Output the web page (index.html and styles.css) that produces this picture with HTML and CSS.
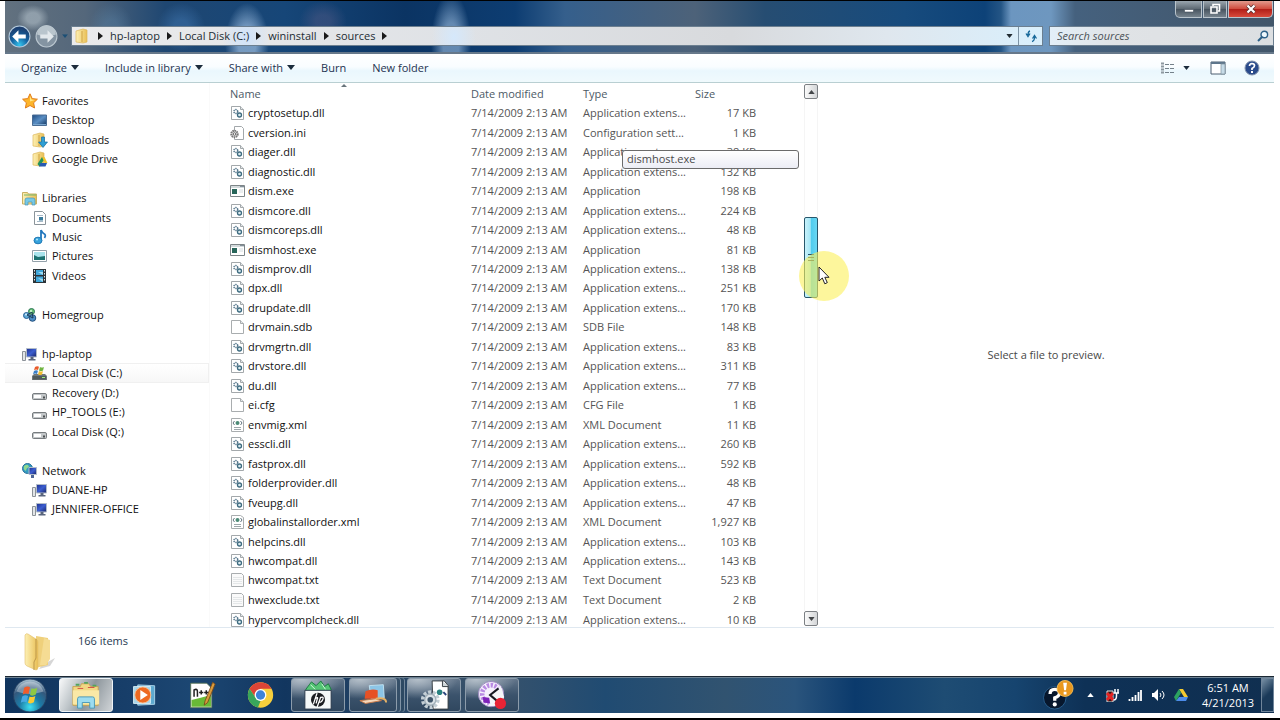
FILE: index.html
```html
<!DOCTYPE html>
<html lang="en">
<head>
<meta charset="utf-8">
<title>sources</title>
<link rel="stylesheet" href="styles.css">
</head>
<body>
<svg class="sprite" aria-hidden="true">
  <defs>
    <linearGradient id="gFolder" x1="0" x2="1"><stop offset="0" stop-color="#fdf0b4"/><stop offset="1" stop-color="#e9bf55"/></linearGradient>
    <linearGradient id="gScreen" x1="0" x2="1" y1="0" y2="1"><stop offset="0" stop-color="#1e2f8c"/><stop offset=".5" stop-color="#3c5ed0"/><stop offset="1" stop-color="#182468"/></linearGradient>
    <linearGradient id="gDesk" x1="0" x2="1" y1="0" y2="1"><stop offset="0" stop-color="#1d4b82"/><stop offset=".5" stop-color="#5b8fc4"/><stop offset="1" stop-color="#12355f"/></linearGradient>
    <radialGradient id="gOrb" cx=".5" cy=".85" r=".8"><stop offset="0" stop-color="#3fe0f2"/><stop offset=".4" stop-color="#1c7ba6"/><stop offset=".75" stop-color="#34587c"/><stop offset="1" stop-color="#9db6c8"/></radialGradient>
    <radialGradient id="gBack" cx=".5" cy=".9" r=".8"><stop offset="0" stop-color="#35c5ee"/><stop offset=".5" stop-color="#1462a0"/><stop offset="1" stop-color="#1c3f70"/></radialGradient>
  </defs>
  <symbol id="dll" viewBox="0 0 16 16"><path d="M1.500 1.500h9l3 3v10h-12z" fill="#fff" stroke="#a3a8ab"/><path d="M10.500 1.500v3h3" fill="#e4e8ea" stroke="#a3a8ab"/><circle cx="5.800" cy="6.500" r="1.900" fill="none" stroke="#56778c" stroke-width="1.500" stroke-dasharray="1.200 .7"/><circle cx="9.500" cy="10" r="2" fill="#dcebf0" stroke="#3e6c80" stroke-width="1.300"/></symbol>
  <symbol id="ini" viewBox="0 0 16 16"><path d="M4.500 1.500h7l2 2v11h-9z" fill="#fff" stroke="#a3a8ab"/><circle cx="4.500" cy="9" r="3.200" fill="#e8e8e8" stroke="#777" stroke-width="2" stroke-dasharray="1.500 .6"/><circle cx="4.500" cy="9" r="1.300" fill="#fff" stroke="#666"/></symbol>
  <symbol id="exe" viewBox="0 0 16 16"><path d="M.5 2.500h14v11H.5z" fill="#fff" stroke="#7d8588"/><path d="M1 3h13v2H1z" fill="#d3dadc"/><path d="M2 6h5v5H2z" fill="#28665a"/><path d="M10.500 3.500h1M12.500 3.500h1" stroke="#345"/><path d="M9 7h4M9 9h4" stroke="#d5dcdf"/></symbol>
  <symbol id="blank" viewBox="0 0 16 16"><path d="M1.500 1.500h9l3 3v10h-12z" fill="#fff" stroke="#a9adaf"/><path d="M10.500 1.500v3h3" fill="#e4e8ea" stroke="#a9adaf"/></symbol>
  <symbol id="txt" viewBox="0 0 16 16"><path d="M1.500 1.500h10l2 2v11h-12z" fill="#fafafa" stroke="#a9adaf"/><path d="M3 5.500h9M3 7.500h9M3 9.500h9M3 11.500h9" stroke="#e4e7e8"/></symbol>
  <symbol id="xml" viewBox="0 0 16 16"><path d="M1.500 1.500h9l3 2v11h-12z" fill="#fff" stroke="#a9adaf"/><path d="M4.500 4L3 6l1.500 2M10.500 4L12 6l-1.500 2" fill="none" stroke="#63757f"/><circle cx="7.500" cy="6" r="2" fill="#4b8a76"/><path d="M4 10.500h7M4 12.500h7" stroke="#9da7ab"/></symbol>
  <symbol id="star" viewBox="0 0 16 16"><path d="M8 .8l2.200 4.800 5.200.6-3.800 3.600 1 5.200L8 12.500 3.400 15l1-5.200L.6 6.200l5.200-.6z" fill="#fdb52a" stroke="#e17c1b"/><path d="M8 3l1.500 3.500 3.300.5L8 8.500z" fill="#ffe78a"/></symbol>
  <symbol id="desktop" viewBox="0 0 16 16"><path d="M.5 3h14v10.500H.5z" fill="url(#gDesk)" stroke="#4a6d94"/><path d="M1 12h13v1H1z" fill="#7ba7d0"/></symbol>
  <symbol id="folder" viewBox="0 0 16 16"><path d="M1 3l7-2 4 1v12l-4 1-7-1z" fill="url(#gFolder)" stroke="#dcb85d" stroke-width=".7"/><path d="M7 3v11" stroke="#cfa445"/></symbol>
  <symbol id="downloads" viewBox="0 0 16 16"><use href="#folder"/><path d="M9.500 5h3v5h3L11 15.500 6.500 10h3z" fill="#2f9fd4" stroke="#176ea3" stroke-width=".7"/></symbol>
  <symbol id="gdfolder" viewBox="0 0 16 16"><use href="#folder"/><path d="M10 6h2.500l3 6h-3z" fill="#efc22f"/><path d="M10 6L5.500 13l2 2.500 4-6z" fill="#21955b"/><path d="M8.500 12H15l-1.500 3.500H7z" fill="#2759b0"/></symbol>
  <symbol id="libraries" viewBox="0 0 16 16"><path d="M.5 2.500h5l1 1.500h8v10H.5z" fill="url(#gFolder)" stroke="#c9b163"/><path d="M2 5h12" stroke="#77b66e"/><path d="M3 15v-5q0-2 2-2h6q2 0 2 2v5h-3v-3H6v3z" fill="#76c9e6" stroke="#4a92b4" stroke-width=".7"/></symbol>
  <symbol id="documents" viewBox="0 0 16 16"><path d="M2.500 1.500h8l3 3v10h-11z" fill="#fff" stroke="#8b949a"/><path d="M5 5.500h6M5 11.500h6" stroke="#a8b9c7"/><path d="M7 7h4v3.500H7z" fill="#397a9b"/></symbol>
  <symbol id="music" viewBox="0 0 16 16"><path d="M9 1v10M9 1q1 3 4 4.500 1 1.500-.5 3.500" fill="none" stroke="#2277bd" stroke-width="1.800"/><ellipse cx="6" cy="11.500" rx="4" ry="3.300" fill="#36a2dc" stroke="#1f78b4"/><circle cx="5" cy="10.500" r="1" fill="#b3e8fb"/></symbol>
  <symbol id="pictures" viewBox="0 0 16 16"><path d="M.5 2.500h14v11H.5z" fill="#fff" stroke="#93a1aa"/><path d="M2 4h11v8H2z" fill="#a9e3ec"/><path d="M2 7l4 2 7-1v4H2z" fill="#1c7271"/></symbol>
  <symbol id="videos" viewBox="0 0 16 16"><path d="M1 1h13v14H1z" fill="#2b3338"/><path d="M4 2h7v5H4zM4 8.500h7V14H4z" fill="#40a7da"/><path d="M6 4l5 3V4zM6 10l5 4v-3z" fill="#a0dcf2"/><path d="M2.500 2v12M12.500 2v12" stroke="#dde5e8" stroke-dasharray="1.500 1.500"/></symbol>
  <symbol id="homegroup" viewBox="0 0 16 16"><circle cx="9.500" cy="4.500" r="3" fill="#69bf75" stroke="#2d7858"/><circle cx="4.500" cy="8.500" r="3" fill="#5fa9d6" stroke="#275e93"/><circle cx="10.500" cy="11" r="3.300" fill="#4c8dc6" stroke="#24517f"/><path d="M5 8l5-3 1 6z" fill="none" stroke="#1d3c55"/><circle cx="9" cy="4" r="1" fill="#d8ffdc"/><circle cx="4" cy="7.500" r="1" fill="#d4eeff"/></symbol>
  <symbol id="pc" viewBox="0 0 16 16"><path d="M.5 5.500h3v9h-3z" fill="#e3e6e8" stroke="#8c9298"/><path d="M4.500 2.500h10v8.500h-10z" fill="url(#gScreen)" stroke="#b2bcc9"/><path d="M8.500 11h3v2h2v1.500h-7V13h2z" fill="#59657d"/></symbol>
  <symbol id="cdrive" viewBox="0 0 16 16"><path d="M2 9h11l2 2v4H0v-4z" fill="#6e777b"/><path d="M1 11h13v3.500H1z" fill="#505b5c"/><path d="M3 2q2-1.500 4-.3L6 5q-2-1-4 .2z" fill="#e85b2b"/><path d="M8 2q2 1 4 0l-1 3.500q-2 1-4 0z" fill="#70b441"/><path d="M2 6q2-1.500 4-.3L5 9q-2-1-4 .2z" fill="#3a80c9"/><path d="M7 6q2 1 4 0l-1 3.500q-2 1-4 0z" fill="#f3bd2e"/><path d="M10 12.500h3" stroke="#9fef7e"/></symbol>
  <symbol id="drive" viewBox="0 0 16 16"><path d="M2 8h11l2 2H0z" fill="#e2e4e5"/><path d="M.5 10q0-1.500 1.500-1.500h11q1.500 0 1.500 1.500v3.500q0 1-1 1h-12q-1 0-1-1z" fill="#c3c7c9" stroke="#777c7f"/><path d="M2 10h7v3H2z" fill="#fff"/><path d="M11 11.500h2v2h-2z" fill="#4c5052"/></symbol>
  <symbol id="network" viewBox="0 0 16 16"><circle cx="5.500" cy="5.500" r="5" fill="#359bc2" stroke="#28719a"/><path d="M2 3q4-3 5 1-3 1-3 4-3-1-2-5z" fill="#8ed98f"/><path d="M7 4.500h7.500v7H7z" fill="url(#gScreen)" stroke="#b2bcc9"/><path d="M9 12h3v3H9z" fill="#4e6795"/></symbol>
  <symbol id="caret" viewBox="0 0 8 5"><path d="M0 0h8L4 5z" fill="currentColor"/></symbol>
  <symbol id="chev" viewBox="0 0 5 8"><path d="M0 0l5 4-5 4z" fill="currentColor"/></symbol>
</svg>

<div class="screen">
  <main class="window">
    <header class="glass">
      <div class="caption">
        <button class="cap min" aria-label="Minimize"><svg viewBox="0 0 12 12"><path d="M1.500 6.500h9v2.500h-9z" fill="#fff" stroke="#434f5b" stroke-width=".6"/></svg></button>
        <button class="cap restore" aria-label="Restore"><svg viewBox="0 0 12 12"><path d="M4 3V1.500h6.500v6.500H9M2 4h6v6H2z" fill="none" stroke="#fff" stroke-width="1.600"/></svg></button>
        <button class="cap close" aria-label="Close"><svg viewBox="0 0 12 12"><path d="M2.500 2.500l7 7M9.500 2.500l-7 7" stroke="#533" stroke-width="3.800"/><path d="M2.500 2.500l7 7M9.500 2.500l-7 7" stroke="#fff" stroke-width="2.200"/></svg></button>
      </div>
      <div class="navrow">
        <button class="round" aria-label="Back"><svg viewBox="0 0 22 22"><circle cx="11" cy="11" r="10" fill="url(#gBack)" stroke="#b5cbdd"/><path d="M4 11l6-6v4h7v4h-7v4z" fill="#fff"/></svg></button>
        <button class="round" aria-label="Forward"><svg viewBox="0 0 22 22"><circle cx="11" cy="11" r="10" fill="#8494a2" stroke="#bcc8d1"/><path d="M2 9a9 9 0 0118 0q-9 4-18 0z" fill="#b9c5cd"/><path d="M18 11l-6-6v4H5v4h7v4z" fill="#e2e8ec"/></svg></button>
        <button class="recent" aria-label="Recent pages"><svg viewBox="0 0 8 5"><use href="#caret"/></svg></button>
        <div class="address">
          <svg class="i16"><use href="#folder"/></svg>
          <svg class="chev"><use href="#chev"/></svg><a href="#">hp-laptop</a>
          <svg class="chev"><use href="#chev"/></svg><a href="#">Local Disk (C:)</a>
          <svg class="chev"><use href="#chev"/></svg><a href="#">wininstall</a>
          <svg class="chev"><use href="#chev"/></svg><a href="#">sources</a>
          <svg class="chev"><use href="#chev"/></svg>
          <button class="history" aria-label="Previous locations"><svg viewBox="0 0 8 5"><use href="#caret"/></svg></button>
          <button class="refresh" aria-label="Refresh"><svg viewBox="0 0 14 14"><path d="M6 2Q4 2.500 4 6M2 4.500L4 7.500 6 4.500M8 12.500q2.500-.5 2.500-4.500M8.500 9.500L10.500 6.500l2 3" fill="none" stroke="#17689a" stroke-width="1.300"/></svg></button>
        </div>
        <label class="search"><input type="text" placeholder="Search sources" aria-label="Search sources"><svg viewBox="0 0 12 12"><circle cx="7.300" cy="4.500" r="3.300" fill="#eef8fd" stroke="#2d6188" stroke-width="1.400"/><path d="M5 7l-4 4" stroke="#2d6188" stroke-width="2"/></svg></label>
      </div>
    </header>

    <div class="toolbar">
      <button>Organize <svg class="caret"><use href="#caret"/></svg></button>
      <button>Include in library <svg class="caret"><use href="#caret"/></svg></button>
      <button>Share with <svg class="caret"><use href="#caret"/></svg></button>
      <button>Burn</button>
      <button>New folder</button>
      <div class="tools">
        <button class="view" aria-label="Change your view"><svg class="i14" viewBox="0 0 14 14"><path d="M1 2.500h3M1 5.500h3M1 8.500h3M1 11.500h3" stroke="#8d989f" stroke-width="2"/><path d="M5 3.500h4M10 3.500h4M5 7.500h4M10 7.500h4M5 11.500h4M10 11.500h4" stroke="#74818a"/></svg><svg class="caret"><use href="#caret"/></svg></button>
        <button aria-label="Show the preview pane"><svg class="i16" viewBox="0 0 16 16"><path d="M1 2h14v12H1z" fill="#fff" stroke="#4d5f70"/><path d="M1 3h14" stroke="#5e768b" stroke-width="2"/><path d="M11 4h4v10h-4z" fill="#c6dbe7" stroke="#7f929f" stroke-width=".7"/></svg></button>
        <button aria-label="Get help"><svg class="i16" viewBox="0 0 16 16"><circle cx="8" cy="8" r="7" fill="#294a8b" stroke="#8493ac"/><path d="M5.500 6Q5.500 3.700 8 3.700t2.500 2Q10.500 7 8 8.500v1.500" fill="none" stroke="#fff" stroke-width="1.700"/><path d="M7 11h2v2H7z" fill="#fff"/></svg></button>
      </div>
    </div>

    <div class="body">
      <nav class="tree" aria-label="Folders">
        <div class="group favorites">
          <a href="#"><svg class="i16"><use href="#star"/></svg>Favorites</a>
          <a class="sub" href="#"><svg class="i16"><use href="#desktop"/></svg>Desktop</a>
          <a class="sub" href="#"><svg class="i16"><use href="#downloads"/></svg>Downloads</a>
          <a class="sub" href="#"><svg class="i16"><use href="#gdfolder"/></svg>Google Drive</a>
        </div>
        <div class="group libs">
          <a href="#"><svg class="i16"><use href="#libraries"/></svg>Libraries</a>
          <a class="sub" href="#"><svg class="i16"><use href="#documents"/></svg>Documents</a>
          <a class="sub" href="#"><svg class="i16"><use href="#music"/></svg>Music</a>
          <a class="sub" href="#"><svg class="i16"><use href="#pictures"/></svg>Pictures</a>
          <a class="sub" href="#"><svg class="i16"><use href="#videos"/></svg>Videos</a>
        </div>
        <div class="group home">
          <a href="#"><svg class="i16"><use href="#homegroup"/></svg>Homegroup</a>
        </div>
        <div class="group computer">
          <a href="#"><svg class="i16"><use href="#pc"/></svg>hp-laptop</a>
          <a class="sub current" href="#"><svg class="i16"><use href="#cdrive"/></svg>Local Disk (C:)</a>
          <a class="sub" href="#"><svg class="i16"><use href="#drive"/></svg>Recovery (D:)</a>
          <a class="sub" href="#"><svg class="i16"><use href="#drive"/></svg>HP_TOOLS (E:)</a>
          <a class="sub" href="#"><svg class="i16"><use href="#drive"/></svg>Local Disk (Q:)</a>
        </div>
        <div class="group net">
          <a href="#"><svg class="i16"><use href="#network"/></svg>Network</a>
          <a class="sub" href="#"><svg class="i16"><use href="#pc"/></svg>DUANE-HP</a>
          <a class="sub" href="#"><svg class="i16"><use href="#pc"/></svg>JENNIFER-OFFICE</a>
        </div>
      </nav>

      <section class="files">
        <table>
          <colgroup><col class="c-name"><col class="c-date"><col class="c-type"><col class="c-size"><col></colgroup>
          <thead><tr><th>Name<svg class="sort" viewBox="0 0 8 4"><path d="M0 4l4-4 4 4z" fill="#69757c"/></svg></th><th>Date modified</th><th>Type</th><th>Size</th><th></th></tr></thead>
          <tbody>
            <tr><td><svg class="i16"><use href="#dll"/></svg>cryptosetup.dll</td><td>7/14/2009 2:13 AM</td><td>Application extens...</td><td>17 KB</td></tr>
            <tr><td><svg class="i16"><use href="#ini"/></svg>cversion.ini</td><td>7/14/2009 2:13 AM</td><td>Configuration sett...</td><td>1 KB</td></tr>
            <tr><td><svg class="i16"><use href="#dll"/></svg>diager.dll</td><td>7/14/2009 2:13 AM</td><td>Application extens...</td><td>38 KB</td></tr>
            <tr><td><svg class="i16"><use href="#dll"/></svg>diagnostic.dll</td><td>7/14/2009 2:13 AM</td><td>Application extens...</td><td>132 KB</td></tr>
            <tr><td><svg class="i16"><use href="#exe"/></svg>dism.exe</td><td>7/14/2009 2:13 AM</td><td>Application</td><td>198 KB</td></tr>
            <tr><td><svg class="i16"><use href="#dll"/></svg>dismcore.dll</td><td>7/14/2009 2:13 AM</td><td>Application extens...</td><td>224 KB</td></tr>
            <tr><td><svg class="i16"><use href="#dll"/></svg>dismcoreps.dll</td><td>7/14/2009 2:13 AM</td><td>Application extens...</td><td>48 KB</td></tr>
            <tr><td><svg class="i16"><use href="#exe"/></svg>dismhost.exe</td><td>7/14/2009 2:13 AM</td><td>Application</td><td>81 KB</td></tr>
            <tr><td><svg class="i16"><use href="#dll"/></svg>dismprov.dll</td><td>7/14/2009 2:13 AM</td><td>Application extens...</td><td>138 KB</td></tr>
            <tr><td><svg class="i16"><use href="#dll"/></svg>dpx.dll</td><td>7/14/2009 2:13 AM</td><td>Application extens...</td><td>251 KB</td></tr>
            <tr><td><svg class="i16"><use href="#dll"/></svg>drupdate.dll</td><td>7/14/2009 2:13 AM</td><td>Application extens...</td><td>170 KB</td></tr>
            <tr><td><svg class="i16"><use href="#blank"/></svg>drvmain.sdb</td><td>7/14/2009 2:13 AM</td><td>SDB File</td><td>148 KB</td></tr>
            <tr><td><svg class="i16"><use href="#dll"/></svg>drvmgrtn.dll</td><td>7/14/2009 2:13 AM</td><td>Application extens...</td><td>83 KB</td></tr>
            <tr><td><svg class="i16"><use href="#dll"/></svg>drvstore.dll</td><td>7/14/2009 2:13 AM</td><td>Application extens...</td><td>311 KB</td></tr>
            <tr><td><svg class="i16"><use href="#dll"/></svg>du.dll</td><td>7/14/2009 2:13 AM</td><td>Application extens...</td><td>77 KB</td></tr>
            <tr><td><svg class="i16"><use href="#blank"/></svg>ei.cfg</td><td>7/14/2009 2:13 AM</td><td>CFG File</td><td>1 KB</td></tr>
            <tr><td><svg class="i16"><use href="#xml"/></svg>envmig.xml</td><td>7/14/2009 2:13 AM</td><td>XML Document</td><td>11 KB</td></tr>
            <tr><td><svg class="i16"><use href="#dll"/></svg>esscli.dll</td><td>7/14/2009 2:13 AM</td><td>Application extens...</td><td>260 KB</td></tr>
            <tr><td><svg class="i16"><use href="#dll"/></svg>fastprox.dll</td><td>7/14/2009 2:13 AM</td><td>Application extens...</td><td>592 KB</td></tr>
            <tr><td><svg class="i16"><use href="#dll"/></svg>folderprovider.dll</td><td>7/14/2009 2:13 AM</td><td>Application extens...</td><td>48 KB</td></tr>
            <tr><td><svg class="i16"><use href="#dll"/></svg>fveupg.dll</td><td>7/14/2009 2:13 AM</td><td>Application extens...</td><td>47 KB</td></tr>
            <tr><td><svg class="i16"><use href="#xml"/></svg>globalinstallorder.xml</td><td>7/14/2009 2:13 AM</td><td>XML Document</td><td>1,927 KB</td></tr>
            <tr><td><svg class="i16"><use href="#dll"/></svg>helpcins.dll</td><td>7/14/2009 2:13 AM</td><td>Application extens...</td><td>103 KB</td></tr>
            <tr><td><svg class="i16"><use href="#dll"/></svg>hwcompat.dll</td><td>7/14/2009 2:13 AM</td><td>Application extens...</td><td>143 KB</td></tr>
            <tr><td><svg class="i16"><use href="#txt"/></svg>hwcompat.txt</td><td>7/14/2009 2:13 AM</td><td>Text Document</td><td>523 KB</td></tr>
            <tr><td><svg class="i16"><use href="#txt"/></svg>hwexclude.txt</td><td>7/14/2009 2:13 AM</td><td>Text Document</td><td>2 KB</td></tr>
            <tr><td><svg class="i16"><use href="#dll"/></svg>hypervcomplcheck.dll</td><td>7/14/2009 2:13 AM</td><td>Application extens...</td><td>10 KB</td></tr>
          </tbody>
        </table>
        <div class="tip" role="tooltip">dismhost.exe</div>
      </section>

      <div class="scroll">
        <button aria-label="Scroll up"><svg viewBox="0 0 8 5"><path d="M0 5l4-5 4 5z" fill="#434649"/></svg></button>
        <div class="track"><div class="thumb"><i></i><i></i><i></i></div></div>
        <button aria-label="Scroll down"><svg viewBox="0 0 8 5"><use href="#caret"/></svg></button>
        <div class="halo"></div>
        <svg class="pointer" viewBox="0 0 12 19"><path d="M1 1v14l3.300-3 2.500 5.800 2.500-1.200-2.500-5.300H11z" fill="#fff" stroke="#222"/></svg>
      </div>

      <aside class="preview">Select a file to preview.</aside>
    </div>

    <footer class="details">
      <svg class="bigfolder" viewBox="0 0 34 40"><path d="M19 33l13-7-5 8-11 3z" fill="#bbb" opacity=".6"/><path d="M13 4l12 2v27l-13 3z" fill="#efd07b"/><path d="M21 6l6 2v19l-4 6h-6z" fill="#f5dc93"/><path d="M2 3q1-2 3-1l8 5q2 1 2 3v25q0 3-2 3L4 34q-2-1-2-3z" fill="url(#gFolder)" stroke="#e1be6b" stroke-width=".6"/><path d="M13 7v19l-2 4v8" fill="none" stroke="#bd974a"/></svg>
      <span>166 items</span>
    </footer>
  </main>

  <footer class="taskbar">
    <button class="orb" aria-label="Start"><svg viewBox="0 0 36 36"><circle cx="18" cy="18" r="17" fill="url(#gOrb)" stroke="#233f60"/><path d="M4 14a14.500 14 0 0128 0q-14 5-28 0z" fill="#fff" opacity=".35"/><path d="M12 10q3-2 6-.5l-1.500 7q-3-1.500-6 .5z" fill="#f15c2b"/><path d="M19.500 10.500q3 1.500 6-.5L24 17q-3 2-6 .5z" fill="#8fc943"/><path d="M10 19q3-2 6-.5L14.500 25q-3-1.500-6 .5z" fill="#48a9e4"/><path d="M17.500 19q3 1.500 6-.5L22 25q-3 2-6 .5z" fill="#fccb32"/></svg></button>
    <button class="task active" aria-label="Windows Explorer"><svg viewBox="0 0 32 32"><path d="M2 7h8l1-3h8l2 3h8v20H2z" fill="#f2d783" stroke="#c5a352"/><path d="M2 11h28v15H2z" fill="#fae8a6"/><path d="M5 5h4M14 3h4M23 6h4" stroke="#52a45c" stroke-width="2"/><path d="M7 9h6M18 8h7" stroke="#d34e43"/><path d="M7 30V20q0-2 2-2h14q2 0 2 2v10h-5v-6h-8v6z" fill="#9cdcf0" stroke="#4798b7"/></svg></button>
    <button class="task pin" aria-label="Media Player"><svg viewBox="0 0 32 32"><path d="M8 4l20 1v22l-20 1z" fill="#5ea9cf" stroke="#b4dcef"/><path d="M3 6h20v20H3z" fill="#a8d6eb" stroke="#e1f4fb"/><circle cx="14" cy="16" r="9.500" fill="#ee6a22" stroke="#fbc69b"/><path d="M11 10l9 6-9 6z" fill="#fff"/></svg></button>
    <button class="task pin" aria-label="Notepad++"><svg viewBox="0 0 32 32"><path d="M2 2h19l6 6v23H2z" fill="#fff" stroke="#516e4c"/><path d="M3 22q12-3 23-6v14H3z" fill="#69b936"/><path d="M6 18v-8q4-2 4 2v6M12 13h5M14.500 10.500v5M18 13h5M20.500 10.500v5" fill="none" stroke="#222" stroke-width="1.800"/><path d="M28 1l3 2-9 22-4 3 1-5z" fill="#d99b3c" stroke="#74461a"/></svg></button>
    <button class="task pin" aria-label="Chrome"><svg viewBox="0 0 32 32"><circle cx="16" cy="16" r="15" fill="#f7cf3c"/><path d="M3 8.500A15 15 0 0129 8.500H16L10 19z" fill="#db4437"/><path d="M3 8.500L10 19l6 4-3 7.700A15 15 0 013 8.500z" fill="#39a55b"/><circle cx="16" cy="16" r="7" fill="#fff"/><circle cx="16" cy="16" r="5.500" fill="#3d83d9"/></svg></button>
    <button class="task" aria-label="HP Support"><svg viewBox="0 0 32 32"><path d="M3 10l6-8 5 4 5-5 4 6 4-3 3 6-4 4H6z" fill="#55c575" stroke="#187a3d"/><path d="M8 5l5 5M20 4l4 6" stroke="#d6ffe1"/><path d="M2 11h28v20H2z" fill="#f5f8f8" stroke="#263547"/><circle cx="16" cy="21" r="7.500" fill="#1b1d21"/><path d="M15 14l-4 12M13 20q4-3 2 1l-1 4M19 18l-4 11M18 19q5-2 3 2t-4 2" fill="none" stroke="#fff" stroke-width="1.400"/></svg></button>
    <button class="task stacked" aria-label="Remote desktop"><svg viewBox="0 0 32 32"><path d="M12 6l15-1 1 14-14 1z" fill="#8cc5e6" stroke="#c0e2f2"/><path d="M8 12q7-3 13-1v9H7z" fill="#e75125"/><path d="M2 22l17-2 6 2-17 3z" fill="#f6d8bb" stroke="#c87846"/><path d="M19 20q11-2 11 4" fill="none" stroke="#e5b166" stroke-width="2"/></svg></button>
    <button class="task" aria-label="Setup"><svg viewBox="0 0 32 32"><path d="M14 1h13l4 5v25H15z" fill="#fff" stroke="#343b40"/><path d="M25 1v6h6" fill="#ccd4d8" stroke="#343b40"/><circle cx="22" cy="13" r="3" fill="#27817f"/><path d="M26 13l3 3" stroke="#28427a" stroke-width="2"/><circle cx="12" cy="21" r="7.500" fill="none" stroke="#c3ced5" stroke-width="5" stroke-dasharray="3 1.710"/><circle cx="12" cy="21" r="6" fill="#d8e0e5" stroke="#a2b0b9" stroke-width="1.500"/><circle cx="12" cy="21" r="3" fill="#40566a"/></svg></button>
    <button class="task" aria-label="Recorder"><svg viewBox="0 0 32 32"><circle cx="15" cy="15" r="13.500" fill="#f5f1fc" stroke="#9a86bf"/><circle cx="15" cy="15" r="9.500" fill="none" stroke="#b98be3" stroke-width="5" stroke-dasharray="2.500 1.500"/><path d="M15 15L25 6l4 12-4 9-13 1z" fill="#f4f6f9"/><path d="M6 18l7 1 1 6-7-1z" fill="#7d23b9"/><path d="M23 9l-9 7 7 6" fill="none" stroke="#161922" stroke-width="2.200"/><circle cx="25" cy="25" r="6" fill="#e82435"/></svg></button>
    <div class="tray">
      <svg class="alert" viewBox="0 0 32 32"><circle cx="12" cy="19" r="12" fill="#07172d" stroke="#2a6090"/><path d="M7 15q0-5 5-5t5 4q0 3-5 5v3" fill="none" stroke="#fff" stroke-width="3.500"/><circle cx="12" cy="26" r="2.200" fill="#fff"/><circle cx="23" cy="9" r="8.500" fill="#e9981f" stroke="#f5bd54"/><path d="M21 3h4l-1 8h-2zM21.500 12.500h3v3h-3z" fill="#fff"/></svg>
      <button aria-label="Show hidden icons"><svg class="up" viewBox="0 0 8 5"><path d="M0 5l4-5 4 5z" fill="#fff"/></svg></button>
      <svg class="i14" viewBox="0 0 14 14"><path d="M2 3h6v11H2z" fill="#301818" stroke="#e3e3e3"/><path d="M2 5l6 7M8 5l-6 7" stroke="#e52323" stroke-width="3"/><path d="M10 1v4M13 1v4M8.500 5H14M11.500 5v3q0 4-3 4" fill="none" stroke="#fff" stroke-width="1.500"/></svg>
      <svg class="i14" viewBox="0 0 14 14"><path d="M1.500 11v2M4.500 9v4M7.500 7v6M10.500 4v9M13 2v11" stroke="#fff" stroke-width="1.800"/></svg>
      <svg class="i14" viewBox="0 0 14 14"><path d="M1 5h2l4-4v12L3 9H1z" fill="#fff"/><path d="M9 5q2 2 0 4M11 3q4 4 0 8" fill="none" stroke="#fff"/></svg>
      <svg class="i14" viewBox="0 0 14 14"><path d="M5 1h4l5 8h-4z" fill="#f4c92f"/><path d="M5 1L0 9l2 4 5-8z" fill="#2ca260"/><path d="M5 9h9l-2 4H2z" fill="#4c8be9"/></svg>
      <time class="clock"><span>6:51 AM</span><span>4/21/2013</span></time>
      <button class="show" aria-label="Show desktop"></button>
    </div>
  </footer>
</div>
</body>
</html>
```

FILE: styles.css
```css
* { box-sizing: border-box; }
body {
  margin: 0;
  background: #fff;
  font-family: "Open Sans", "Noto Sans", sans-serif;
  font-size: 11px;
  line-height: 16px;
  color: #111;
}
button {
  margin: 0;
  padding: 0;
  border: 0;
  background: none;
  font: inherit;
  color: inherit;
  display: flex;
  align-items: center;
  justify-content: center;
}
a { color: inherit; text-decoration: none; }
svg { flex: none; display: block; }
.sprite { position: absolute; width: 0; height: 0; }
.i16 { width: 16px; height: 16px; }
.i14 { width: 14px; height: 14px; }
.caret { width: 8px; height: 5px; }

.screen {
  height: 100vh;
  display: flex;
  flex-direction: column;
  border-top: 1px solid #000;
  border-bottom: 2px solid #000;
  padding: 0 6px 5px 5px;
}
.window { flex: 1; min-height: 0; display: flex; flex-direction: column; }

/* Title bar and address row */
.glass {
  height: 53px;
  display: flex;
  flex-direction: column;
  border-bottom: 2px solid #66788a;
  background:
    radial-gradient(ellipse 16px 13px at 28px 17px, #a9b7c1aa 40%, transparent),
    radial-gradient(ellipse 22px 24px at 106px 26px, #5c85a866 30%, transparent),
    radial-gradient(ellipse 24px 24px at 176px 26px, #3f74ad88 30%, transparent),
    radial-gradient(ellipse 22px 40px at 242px 42px, #a4c4e6aa 40%, transparent),
    radial-gradient(ellipse 24px 20px at 318px 20px, #4c588488 30%, transparent),
    radial-gradient(ellipse 20px 50px at 446px 42px, #8fb1d4aa 40%, transparent),
    linear-gradient(90deg, #62717f 0, #54677b 80px, #1f4772 160px, #164678 280px, #0b3463 400px, #0d3d72 510px, #355f8c 560px, #4d6279 690px, #264d72 760px, #174b7d 900px, #0d4278 980px, #245585 996px, #6c96c0 1006px, #6e97bf 1046px, #45617e 1070px, #42566a 100%);
}
.caption { height: 25px; display: flex; justify-content: flex-end; align-items: flex-start; gap: 1px; padding-right: 1px; }
.cap { height: 17px; border: 1px solid #b9c4cc; border-top: 0; background: linear-gradient(#9aa6af, #5c6872 50%, #45525e 50%, #76838d); }
.cap svg { width: 12px; height: 12px; }
.min { width: 27px; border-radius: 0 0 0 5px; }
.restore { width: 24px; }
.close { width: 45px; border-radius: 0 0 5px 0; background: linear-gradient(#e29a8d, #cf4a3c 50%, #b01d17 50%, #d84a3b); }
.navrow { height: 20px; display: flex; align-items: center; }
.round { width: 26px; }
.round svg { width: 23px; height: 23px; }
.round:first-child { width: 28px; }
.recent { width: 12px; color: #1b4f76; }
.recent svg { width: 6px; height: 4px; }
.address {
  flex: 1;
  height: 20px;
  display: flex;
  align-items: center;
  gap: 7px;
  padding-left: 3px;
  border: 1px solid #6c7f90;
  color: #222c33;
  background:
    radial-gradient(ellipse 24px 30px at 174px 10px, #cfe3fa, transparent),
    radial-gradient(ellipse 22px 30px at 382px 10px, #d5e8fb, transparent),
    linear-gradient(90deg, #ebebec, #dfe2e6 40%, #d8dadd 68%, #dfe7ee 84%, #d9effc);
}
.address .chev { width: 5px; height: 8px; color: #1a1a1a; }
.history { width: 16px; margin-left: auto; }
.history svg { width: 7px; height: 4px; }
.refresh { width: 24px; height: 18px; border-left: 1px solid #7d93a5; }
.refresh svg { width: 14px; height: 14px; }
.history + .refresh { margin-left: -6px; }
.search {
  width: 225px;
  height: 20px;
  margin-left: 6px;
  display: flex;
  align-items: center;
  padding: 0 4px 0 7px;
  border: 1px solid #6c7f90;
  background: linear-gradient(90deg, #e3eff8, #e0e3e6 30%, #dcdfe2);
}
.search input { flex: 1; min-width: 0; border: 0; padding: 0; background: none; font: italic 11px/16px "Open Sans", sans-serif; color: #333; outline: 0; }
.search input::placeholder { color: #4c5257; opacity: 1; }
.search svg { width: 12px; height: 12px; }

.toolbar {
  height: 29px;
  display: flex;
  align-items: center;
  gap: 26px;
  padding: 0 14px 1px 16px;
  border-bottom: 1px solid #b9cfd2;
  background: linear-gradient(#fff 0, #f9fdff 45%, #eaf7fd 60%, #f0fafd);
  color: #1e3350;
}
.toolbar button { gap: 4px; }
.toolbar .caret { color: #1c2c3c; }
.tools { margin-left: auto; display: flex; align-items: center; gap: 18px; }
.tools .view { gap: 9px; margin-right: 2px; }
.tools .caret { width: 7px; height: 4px; }

/* Main area */
.body { flex: 1; min-height: 0; display: flex; overflow: hidden; }
.tree {
  width: 205px;
  height: calc(100% + 9px);
  padding-top: 8px;
  display: grid;
  grid-template-rows: repeat(28, 1fr);
  border-right: 1px solid #fafafa;
}
.group { display: grid; grid-auto-rows: 1fr; }
.favorites { grid-row: 1 / span 4; }
.libs { grid-row: 6 / span 5; }
.home { grid-row: 12 / span 1; }
.computer { grid-row: 14 / span 5; }
.net { grid-row: 20 / span 3; }
.group a { display: flex; align-items: center; gap: 4px; padding-left: 17px; min-height: 0; }
.group .sub { padding-left: 27px; }
.group .current { background: linear-gradient(#fff, #f7f7f7); border: 1px solid #f0f0f0; border-left: 0; }

.files { width: 594px; padding: 1px 0 0 20px; position: relative; }
table { width: 100%; height: calc(100% + 2px); table-layout: fixed; border-collapse: collapse; color: #555; }
.c-name { width: 241px; }
.c-date { width: 112px; }
.c-type { width: 112px; }
.c-size { width: 61px; }
th, td { padding: 0; height: 19px; font-weight: 400; text-align: left; white-space: nowrap; }
th { color: #4c5a66; position: relative; }
td { padding-top: 1px; }
td:first-child { color: #111; }
td .i16 { display: inline-block; vertical-align: top; margin-right: 2px; }
td:nth-child(4) { text-align: right; }
.sort { position: absolute; left: 111px; top: 0; width: 6px; height: 3px; }
.tip {
  position: absolute;
  left: 412px;
  top: 67px;
  width: 177px;
  height: 19px;
  padding-left: 4px;
  border: 1px solid #6b6b6b;
  border-radius: 3px;
  background: linear-gradient(#fff, #ecedf5);
  color: #4a4a4a;
}

.scroll { width: 14px; display: flex; flex-direction: column; padding: 1px 0; position: relative; }
.scroll > button { height: 15px; border: 1px solid #7c8084; border-radius: 2px; background: linear-gradient(90deg, #fafafa, #d4d6d8); color: #434649; }
.scroll button svg { width: 7px; height: 4px; }
.track { flex: 1; border: solid #f5f5f5; border-width: 0 1px; padding-top: 118px; }
.thumb {
  height: 81px;
  margin: 0 -1px;
  border: 1px solid #27576c;
  border-radius: 2px;
  background: linear-gradient(90deg, #c9f2fb 0, #a3e6f6 45%, #4ecbee 50%, #6ad7f3);
  display: flex;
  flex-direction: column;
  align-items: center;
  justify-content: center;
  gap: 2px;
}
.thumb i { width: 6px; height: 1px; background: #265468; }
.halo { position: absolute; left: -5px; top: 168px; width: 50px; height: 50px; border-radius: 50%; background: #fcf05a99; }
.pointer { position: absolute; left: 14px; top: 183px; width: 12px; height: 19px; }
.preview { flex: 1; display: flex; align-items: center; justify-content: center; color: #484848; }

.details { height: 49px; display: flex; align-items: flex-start; gap: 19px; padding: 4px 16px; border-top: 1px solid #dfe8f0; color: #26394f; }
.details span { padding-top: 1px; }
.bigfolder { width: 38px; height: 40px; }

/* Taskbar */
.taskbar {
  height: 37px;
  display: flex;
  align-items: stretch;
  border-top: 1px solid #1b2733;
  box-shadow: inset 0 1px #6d8293;
  background: linear-gradient(90deg, #10345d 0, #173e69 120px, #1c4773 190px, #12365f 280px, #3a536b 480px, #204b72 600px, #315370 720px, #2a547c 790px, #0b3a6c 850px, #1e4c73 940px, #16446f 1010px, #0e3156 1080px, #102f50 100%);
}
.orb { width: 50px; }
.orb svg { width: 36px; height: 35px; }
.task { width: 54px; margin: 1px 4px 1px 0; border: 1px solid #8c9cab; border-radius: 3px; background: radial-gradient(ellipse 40px 20px at 10px 0, #b5c0ca, transparent), linear-gradient(#62758a, #3b536c 50%, #30475f); }
.task svg { width: 30px; height: 30px; }
.orb + .task { margin-left: 4px; }
.active { border-color: #eef3f6; background: linear-gradient(115deg, #f7f8f9, #bfc6ca 30%, #8e979d 55%, #d0d4d7); }
.pin { background: none; border-color: transparent; }
.pin svg { width: 27px; height: 28px; }
.stacked { width: 48px; margin-right: 10px; box-shadow: 3px 0 #354f68, 4px 0 #8093a5, 7px 0 #2d4963, 8px 0 #73889b; }
.tray { margin-left: auto; display: flex; align-items: center; color: #fff; gap: 9px; }
.alert { width: 31px; height: 30px; margin-right: 4px; }
.up { width: 7px; height: 4px; margin-right: 2px; }
.clock { width: 62px; display: flex; flex-direction: column; text-align: center; line-height: 15px; }
.show { align-self: stretch; width: 13px; margin: 1px 0 1px -7px; border: 1px solid #70859a; background: linear-gradient(135deg, #7890a5, #1b3a59 50%); }
```
